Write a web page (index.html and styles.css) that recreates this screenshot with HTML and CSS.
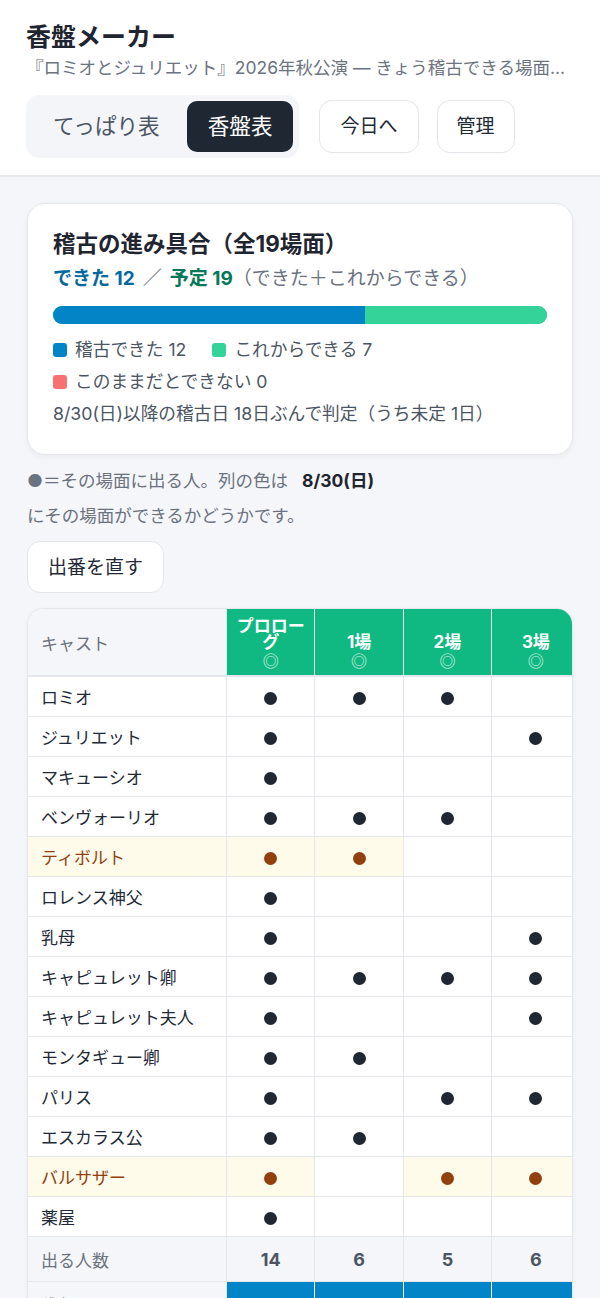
FILE: index.html
```html
<!DOCTYPE html>
<html lang="ja">
<head>
<meta charset="utf-8">
<title>香盤メーカー</title>
<link rel="stylesheet" href="styles.css">
</head>
<body>
<header class="top">
  <h1 class="title">香盤メーカー</h1>
  <p class="sub">『ロミオとジュリエット』2026年秋公演 — きょう稽古できる場面...</p>
  <div class="toolbar">
    <div class="seg">
      <button class="seg-btn">てっぱり表</button>
      <button class="seg-btn active">香盤表</button>
    </div>
    <button class="btn">今日へ</button>
    <button class="btn btn-narrow">管理</button>
  </div>
</header>

<main class="main">
  <section class="card">
    <h2 class="card-title">稽古の進み具合（全19場面）</h2>
    <p class="summary"><span class="done">できた 12</span><span class="slash">／</span><span class="plan">予定 19</span><span class="paren">（できた＋これからできる）</span></p>
    <div class="bar"><div class="bar-done" style="width:63.16%"></div><div class="bar-will"></div></div>
    <div class="legend">
      <span class="lg"><i class="sq sq-blue"></i>稽古できた 12</span>
      <span class="lg"><i class="sq sq-green"></i>これからできる 7</span>
      <span class="lg"><i class="sq sq-red"></i>このままだとできない 0</span>
    </div>
    <p class="basis">8/30(日)以降の稽古日 18日ぶんで判定（うち未定 1日）</p>
  </section>

  <div class="note">
    <span>●＝その場面に出る人。列の色は</span>
    <strong class="note-date">8/30(日)</strong>
    <span>にその場面ができるかどうかです。</span>
  </div>

  <button class="btn btn-edit">出番を直す</button>

  <div class="table-wrap">
    <table class="grid">
      <colgroup>
        <col class="c-cast"><col class="c-scene"><col class="c-scene"><col class="c-scene"><col class="c-scene"><col class="c-scene"><col class="c-scene">
      </colgroup>
      <thead>
        <tr>
          <th class="h-cast">キャスト</th>
          <th class="h-scene"><span class="h-name">プロローグ</span><span class="h-mark">◎</span></th>
          <th class="h-scene"><span class="h-name">1場</span><span class="h-mark">◎</span></th>
          <th class="h-scene"><span class="h-name">2場</span><span class="h-mark">◎</span></th>
          <th class="h-scene"><span class="h-name">3場</span><span class="h-mark">◎</span></th>
          <th class="h-scene"><span class="h-name">4場</span><span class="h-mark">◎</span></th>
          <th class="h-scene"><span class="h-name">5場</span><span class="h-mark">◎</span></th>
        </tr>
      </thead>
      <tbody>
        <tr><td class="cast">ロミオ</td><td><i class="dot"></i></td><td><i class="dot"></i></td><td><i class="dot"></i></td><td></td><td><i class="dot"></i></td><td><i class="dot"></i></td></tr>
        <tr><td class="cast">ジュリエット</td><td><i class="dot"></i></td><td></td><td></td><td><i class="dot"></i></td><td><i class="dot"></i></td><td></td></tr>
        <tr><td class="cast">マキューシオ</td><td><i class="dot"></i></td><td></td><td></td><td></td><td><i class="dot"></i></td><td></td></tr>
        <tr><td class="cast">ベンヴォーリオ</td><td><i class="dot"></i></td><td><i class="dot"></i></td><td><i class="dot"></i></td><td></td><td><i class="dot"></i></td><td></td></tr>
        <tr class="warn"><td class="cast">ティボルト</td><td class="on"><i class="dot"></i></td><td class="on"><i class="dot"></i></td><td></td><td></td><td></td><td></td></tr>
        <tr><td class="cast">ロレンス神父</td><td><i class="dot"></i></td><td></td><td></td><td></td><td></td><td><i class="dot"></i></td></tr>
        <tr><td class="cast">乳母</td><td><i class="dot"></i></td><td></td><td></td><td><i class="dot"></i></td><td></td><td></td></tr>
        <tr><td class="cast">キャピュレット卿</td><td><i class="dot"></i></td><td><i class="dot"></i></td><td><i class="dot"></i></td><td><i class="dot"></i></td><td></td><td></td></tr>
        <tr><td class="cast">キャピュレット夫人</td><td><i class="dot"></i></td><td></td><td></td><td><i class="dot"></i></td><td></td><td></td></tr>
        <tr><td class="cast">モンタギュー卿</td><td><i class="dot"></i></td><td><i class="dot"></i></td><td></td><td></td><td></td><td></td></tr>
        <tr><td class="cast">パリス</td><td><i class="dot"></i></td><td></td><td><i class="dot"></i></td><td><i class="dot"></i></td><td></td><td></td></tr>
        <tr><td class="cast">エスカラス公</td><td><i class="dot"></i></td><td><i class="dot"></i></td><td></td><td></td><td></td><td></td></tr>
        <tr class="warn"><td class="cast">バルサザー</td><td class="on"><i class="dot"></i></td><td></td><td class="on"><i class="dot"></i></td><td class="on"><i class="dot"></i></td><td></td><td></td></tr>
        <tr><td class="cast">薬屋</td><td><i class="dot"></i></td><td></td><td></td><td></td><td></td><td></td></tr>
      </tbody>
      <tfoot>
        <tr class="count"><td class="cast">出る人数</td><td>14</td><td>6</td><td>5</td><td>6</td><td>4</td><td>2</td></tr>
        <tr class="state"><td class="cast">稽古できる？</td><td class="ok"></td><td class="ok"></td><td class="ok"></td><td class="ok"></td><td class="ok"></td><td class="ok"></td></tr>
      </tfoot>
    </table>
  </div>
</main>
</body>
</html>
```

FILE: styles.css
```css
* { box-sizing: border-box; }

html, body {
  margin: 0;
  padding: 0;
}

body {
  background: #f5f6f9;
  color: #1f2937;
  font-family: "Inter", "Noto Sans CJK JP", "Noto Sans", sans-serif;
}

button {
  font-family: inherit;
  cursor: pointer;
}

/* ---------- header ---------- */
.top {
  background: #ffffff;
  border-bottom: 2px solid #e8eaef;
  padding: 21px 26px 17px;
}

.title {
  margin: 0;
  font-size: 25px;
  line-height: 32px;
  font-weight: 700;
  color: #1f2530;
}

.sub {
  margin: 2px 0 0;
  font-size: 17.5px;
  line-height: 26px;
  color: #6b7280;
  white-space: nowrap;
  overflow: hidden;
}

.toolbar {
  margin-top: 14px;
  display: flex;
  align-items: center;
  gap: 20px;
}

.seg {
  display: flex;
  gap: 6px;
  padding: 6px;
  background: #f3f5f8;
  border-radius: 13px;
}

.seg-btn {
  border: 0;
  background: transparent;
  font-size: 21.6px;
  line-height: 51px;
  height: 51px;
  padding: 0 21px;
  border-radius: 10px;
  color: #4b5563;
}

.seg-btn.active {
  background: #1f2733;
  color: #ffffff;
}

.btn {
  background: #ffffff;
  border: 1px solid #e2e5ea;
  border-radius: 13px;
  height: 53px;
  padding: 0 20px;
  font-size: 19px;
  line-height: 51px;
  color: #1f2937;
}

.btn-narrow {
  margin-left: -2px;
  padding: 0 19px;
}

/* ---------- main ---------- */
.main {
  padding: 26px 27px 40px;
}

.card {
  background: #ffffff;
  border: 1px solid #e5e7eb;
  border-radius: 18px;
  box-shadow: 0 2px 6px rgba(15, 23, 42, 0.05);
  padding: 25px 25px 27px;
}

.card-title {
  margin: 0;
  font-size: 22.5px;
  line-height: 30px;
  font-weight: 700;
  color: #1f2530;
}

.summary {
  margin: 7px 0 0;
  font-size: 19px;
  line-height: 26px;
  color: #6b7280;
}

.done { color: #0369a1; font-weight: 700; }
.plan { color: #047857; font-weight: 700; }
.slash { color: #6b7280; margin: 0 8px; }

.bar {
  margin-top: 14px;
  height: 18px;
  border-radius: 9px;
  overflow: hidden;
  display: flex;
  background: #34d399;
}

.bar-done { background: #0284c7; }
.bar-will { flex: 1; background: #34d399; }

.legend {
  margin-top: 13px;
  display: flex;
  flex-wrap: wrap;
  column-gap: 26px;
  row-gap: 6px;
}

.lg {
  display: inline-flex;
  align-items: center;
  gap: 8px;
  font-size: 17.7px;
  line-height: 26px;
  color: #4b5563;
}

.sq {
  width: 14px;
  height: 14px;
  border-radius: 3px;
  display: inline-block;
}

.sq-blue { background: #0284c7; }
.sq-green { background: #34d399; }
.sq-red { background: #f87171; }

.basis {
  margin: 6px 0 0;
  font-size: 17.7px;
  line-height: 26px;
  color: #4b5563;
}

.note {
  margin-top: 13px;
  display: flex;
  flex-wrap: wrap;
  column-gap: 14px;
  row-gap: 9px;
  font-size: 17.5px;
  line-height: 26px;
  color: #6b7280;
}

.note-date {
  color: #1f2530;
  font-weight: 700;
}

.btn-edit {
  display: block;
  margin-top: 12px;
  height: 52px;
}

/* ---------- table ---------- */
.table-wrap {
  margin-top: 15px;
  border: 1px solid #e3e6eb;
  border-radius: 16px;
  overflow: hidden;
  background: #ffffff;
  box-shadow: 0 2px 6px rgba(15, 23, 42, 0.04);
}

.grid {
  border-collapse: separate;
  border-spacing: 0;
  table-layout: fixed;
  width: 728px;
}

.c-cast { width: 199px; }
.c-scene { width: 88.4px; }

.grid th,
.grid td {
  padding: 0;
  border-right: 1px solid #e3e6eb;
  border-bottom: 1px solid #e3e6eb;
}

.h-cast {
  background: #f5f6f9;
  text-align: left;
  padding-left: 13px !important;
  font-size: 17px;
  font-weight: 400;
  color: #6b7280;
  height: 68px;
  vertical-align: middle;
  border-bottom-width: 2px !important;
}

.h-scene {
  background: #10b981;
  color: #ffffff;
  vertical-align: bottom;
  text-align: center;
  padding: 0 4px 3px !important;
  border-right-color: #e6f5ee !important;
  border-bottom-width: 2px !important;
  border-bottom-color: #e3e6eb !important;
}

.h-name {
  display: block;
  font-size: 17px;
  line-height: 16px;
  font-weight: 700;
}

.h-mark {
  display: block;
  font-size: 16px;
  line-height: 22px;
  font-weight: 400;
  opacity: 0.85;
}

.grid tbody td {
  height: 40px;
  text-align: center;
  vertical-align: middle;
  background: #ffffff;
}

.grid td.cast {
  text-align: left;
  padding-left: 13px;
  font-size: 17px;
  color: #1f2937;
}

.dot {
  display: inline-block;
  width: 13px;
  height: 13px;
  border-radius: 50%;
  background: #1f2733;
  vertical-align: middle;
}

.warn td.cast,
.warn td.on {
  background: #fffbea;
}

.warn td.cast { color: #92400e; }
.warn .dot { background: #92400e; }

.count td {
  height: 45px;
  background: #f5f6f9;
  text-align: center;
  font-size: 18px;
  font-weight: 700;
  color: #4b5563;
}

.count td.cast {
  font-weight: 400;
  color: #6b7280;
  font-size: 17px;
}

.state td {
  height: 44px;
  background: #f5f6f9;
}

.state td.ok {
  background: #0284c7;
  border-right-color: #ffffff;
}

.state td.cast {
  font-size: 15px;
  color: #6b7280;
}
```
